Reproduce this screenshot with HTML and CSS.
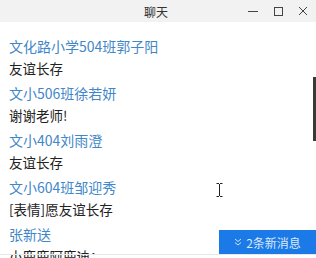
FILE: index.html
```html
<!DOCTYPE html>
<html lang="zh-CN">
<head>
    <meta charset="UTF-8">
    <title>聊天</title>
    <link rel="stylesheet" href="styles.css">
</head>
<body>
    <div class="window">
        <header class="titlebar">
            <span class="title">聊天</span>
            <div class="controls">
                <svg width="12" height="12" viewBox="0 0 12 12"><path d="M1 6.5h10" stroke="#444" stroke-width="1"/></svg>
                <svg width="12" height="12" viewBox="0 0 12 12"><rect x="2.5" y="2.5" width="8" height="8" fill="none" stroke="#444" stroke-width="1"/></svg>
                <svg width="12" height="12" viewBox="0 0 12 12"><path d="M2 2l8 8M10 2l-8 8" stroke="#444" stroke-width="1"/></svg>
            </div>
        </header>

        <div class="chat">
            <div class="msg">
                <div class="name">文化路小学504班郭子阳</div>
                <div class="text">友谊长存</div>
            </div>
            <div class="msg">
                <div class="name">文小506班徐若妍</div>
                <div class="text">谢谢老师!</div>
            </div>
            <div class="msg">
                <div class="name">文小404刘雨澄</div>
                <div class="text">友谊长存</div>
            </div>
            <div class="msg">
                <div class="name">文小604班邹迎秀</div>
                <div class="text">[表情]愿友谊长存</div>
            </div>
            <div class="msg">
                <div class="name">张新送</div>
                <div class="text">小鹿鹿阿鹿迪：</div>
            </div>

            <div class="scrollbar"></div>

            <svg class="cursor" width="7" height="14" viewBox="0 0 7 14">
                <path d="M0.5 0.5h2.5M4 0.5h2.5M3.5 1v12M0.5 13.5h2.5M4 13.5h2.5" stroke="#222" stroke-width="1" fill="none"/>
            </svg>

            <button class="new-msg">
                <svg width="8" height="8" viewBox="0 0 8 8"><path d="M1 1l3 2.5 3-2.5M1 4.5l3 2.5 3-2.5" stroke="#cfe2fb" stroke-width="1" fill="none"/></svg>
                <span>2条新消息</span>
            </button>

            <div class="divider"></div>
        </div>
    </div>
</body>
</html>
```

FILE: styles.css
```css
:root {
    --title-bg: #f2f2f2;
    --name-color: #3f87c9;
    --text-color: #222;
    --accent: #1c7ae8;
}

* {
    box-sizing: border-box;
    margin: 0;
    padding: 0;
}

body {
    width: 316px;
    height: 258px;
    overflow: hidden;
    background: #fff;
    font-family: "Noto Sans CJK SC", "Noto Sans", sans-serif;
}

.window {
    display: flex;
    flex-direction: column;
    height: 258px;
}

.titlebar {
    height: 22px;
    flex-shrink: 0;
    background: var(--title-bg);
    display: flex;
    align-items: center;
    justify-content: center;
    position: relative;
}

.title {
    font-size: 12px;
    color: #333;
    margin-left: -4px;
}

.controls {
    position: absolute;
    right: 7px;
    top: 5px;
    display: flex;
    gap: 13px;
}

.chat {
    position: relative;
    flex: 1;
    padding: 13px 0 0 9px;
    overflow: hidden;
}

.msg {
    margin-bottom: 3px;
}

.name {
    font-size: 14px;
    line-height: 22px;
    color: var(--name-color);
}

.text {
    font-size: 13.5px;
    line-height: 22px;
    color: var(--text-color);
}

.scrollbar {
    position: absolute;
    right: 0;
    top: 55px;
    width: 3px;
    height: 64px;
    background: #3a3a3a;
}

.cursor {
    position: absolute;
    left: 216px;
    top: 161px;
}

.new-msg {
    position: absolute;
    right: 0;
    top: 208px;
    width: 97px;
    height: 24px;
    border: none;
    background: var(--accent);
    color: #dbe9fc;
    font-family: inherit;
    font-size: 12px;
    display: flex;
    align-items: center;
    justify-content: center;
    gap: 4px;
}

.divider {
    position: absolute;
    left: 0;
    right: 0;
    top: 232px;
    height: 1px;
    background: #e8e8e8;
}
```
